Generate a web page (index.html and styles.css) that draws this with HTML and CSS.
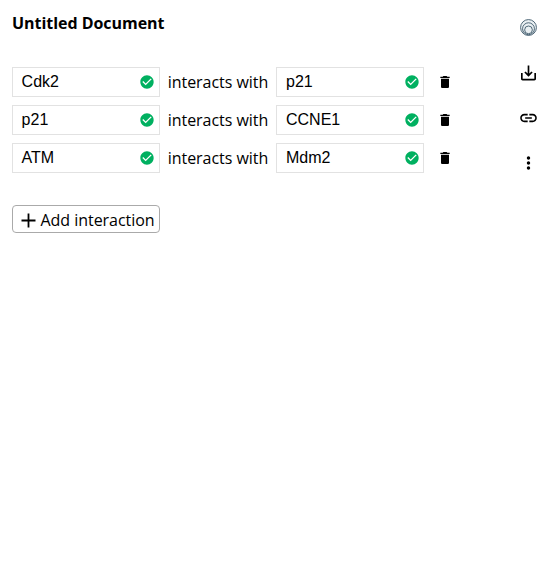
FILE: index.html
```
<!DOCTYPE html>
<html lang="en">
<head>
<meta charset="utf-8">
<title>Untitled Document</title>
<link rel="stylesheet" href="styles.css">
</head>
<body>
<svg class="defs" width="0" height="0">
  <symbol id="check" viewBox="0 0 24 24"><path d="M12 2C6.48 2 2 6.48 2 12s4.48 10 10 10 10-4.48 10-10S17.52 2 12 2zm-2 15l-5-5 1.41-1.41L10 14.17l7.59-7.59L19 8l-9 9z"/></symbol>
  <symbol id="trash" viewBox="0 0 24 24"><path d="M6 19c0 1.1.9 2 2 2h8c1.100 0 2-.9 2-2V7H6v12zM19 4h-3.500l-1-1h-5l-1 1H5v2h14V4z"/></symbol>
</svg>
<div class="page">
  <main class="editor">
    <h1 class="title">Untitled Document</h1>
    <ul class="interactions">
      <li class="interaction">
        <div class="entity">Cdk2<svg class="check"><use href="#check"/></svg></div>
        <span class="verb">interacts with</span>
        <div class="entity">p21<svg class="check"><use href="#check"/></svg></div>
        <svg class="trash"><use href="#trash"/></svg>
      </li>
      <li class="interaction">
        <div class="entity">p21<svg class="check"><use href="#check"/></svg></div>
        <span class="verb">interacts with</span>
        <div class="entity">CCNE1<svg class="check"><use href="#check"/></svg></div>
        <svg class="trash"><use href="#trash"/></svg>
      </li>
      <li class="interaction">
        <div class="entity">ATM<svg class="check"><use href="#check"/></svg></div>
        <span class="verb">interacts with</span>
        <div class="entity">Mdm2<svg class="check"><use href="#check"/></svg></div>
        <svg class="trash"><use href="#trash"/></svg>
      </li>
    </ul>
    <button class="add"><svg class="plus" viewBox="0 0 15 15"><path d="M7.500 .5v14M.5 7.500h14"/></svg><span>Add interaction</span></button>
  </main>
  <nav class="tools">
    <svg class="logo" viewBox="0 0 18 18"><circle cx="9" cy="9" r="8.400"/><circle cx="9" cy="10.300" r="6.300"/><circle cx="9" cy="11.500" r="4.100"/></svg>
    <svg class="tool" viewBox="-.6 0 24 24"><path d="M19 12v7H5v-7H3v7c0 1.100.9 2 2 2h14c1.100 0 2-.9 2-2v-7h-2zm-6 .67l2.590-2.580L17 11.500l-5 5-5-5 1.410-1.410L11 12.670V3h2v9.670z"/></svg>
    <svg class="tool" viewBox="-.6 0 24 24"><path d="M3.900 12c0-1.710 1.390-3.100 3.100-3.100h4V7H7c-2.760 0-5 2.240-5 5s2.240 5 5 5h4v-1.900H7c-1.710 0-3.100-1.390-3.100-3.100zM8 13h8v-2H8v2zm9-6h-4v1.900h4c1.710 0 3.100 1.390 3.100 3.100s-1.390 3.100-3.100 3.100h-4V17h4c2.760 0 5-2.240 5-5s-2.240-5-5-5z"/></svg>
    <svg class="tool" viewBox="-.6 0 24 24"><path d="M12 8c1.100 0 2-.9 2-2s-.9-2-2-2-2 .9-2 2 .9 2 2 2zm0 2c-1.100 0-2 .9-2 2s.9 2 2 2 2-.9 2-2-.9-2-2-2zm0 6c-1.100 0-2 .9-2 2s.9 2 2 2 2-.9 2-2-.9-2-2-2z"/></svg>
  </nav>
</div>
</body>
</html>
```
FILE: styles.css
```
* { box-sizing: border-box; }
body { margin: 0; background: #fff; color: #000; font: 16px/22px "Open Sans", sans-serif; }
.defs { position: absolute; }
.page { display: flex; justify-content: space-between; padding: 12px 20px 0 12px; }
.title { margin: 0 0 33px; font-size: 16px; line-height: 22px; font-weight: 700; letter-spacing: -0.04px; }
.interactions { display: grid; gap: 8px; margin: 0 0 32px; padding: 0; list-style: none; }
.interaction { display: flex; align-items: center; height: 30px; }
.entity { display: flex; align-items: center; justify-content: space-between; width: 148px; height: 30px; padding: 0 4px 0 8.6px; border: 1px solid #e2e2e2; font: 16px/20px "Liberation Sans", sans-serif; }
.check { width: 16px; height: 16px; fill: #00b060; }
.verb + .entity { padding-right: 3px; padding-left: 9px; }
.verb { width: 116px; text-align: center; white-space: nowrap; letter-spacing: -0.03px; }
.trash { width: 16px; height: 16px; margin-left: 13px; }
.add { display: flex; align-items: center; width: 148px; height: 28px; padding: 2px 0 0 8px; border: 1px solid #aaa; border-radius: 4px; background: #fff; color: #000; font: 16px/22px "Open Sans", sans-serif; letter-spacing: -0.04px; white-space: nowrap; }
.plus { width: 15px; height: 15px; margin-right: 4.5px; flex: none; fill: none; stroke: #000; stroke-width: 1.8; }
.tools { display: flex; flex-direction: column; align-items: flex-start; width: 20px; padding-top: 7px; }
.logo { width: 17px; height: 17px; margin: 0 0 27px 2px; fill: #e9eff2; stroke: #455f70; stroke-width: 1; }
.tool { width: 20px; height: 20px; margin-bottom: 25px; }
```
